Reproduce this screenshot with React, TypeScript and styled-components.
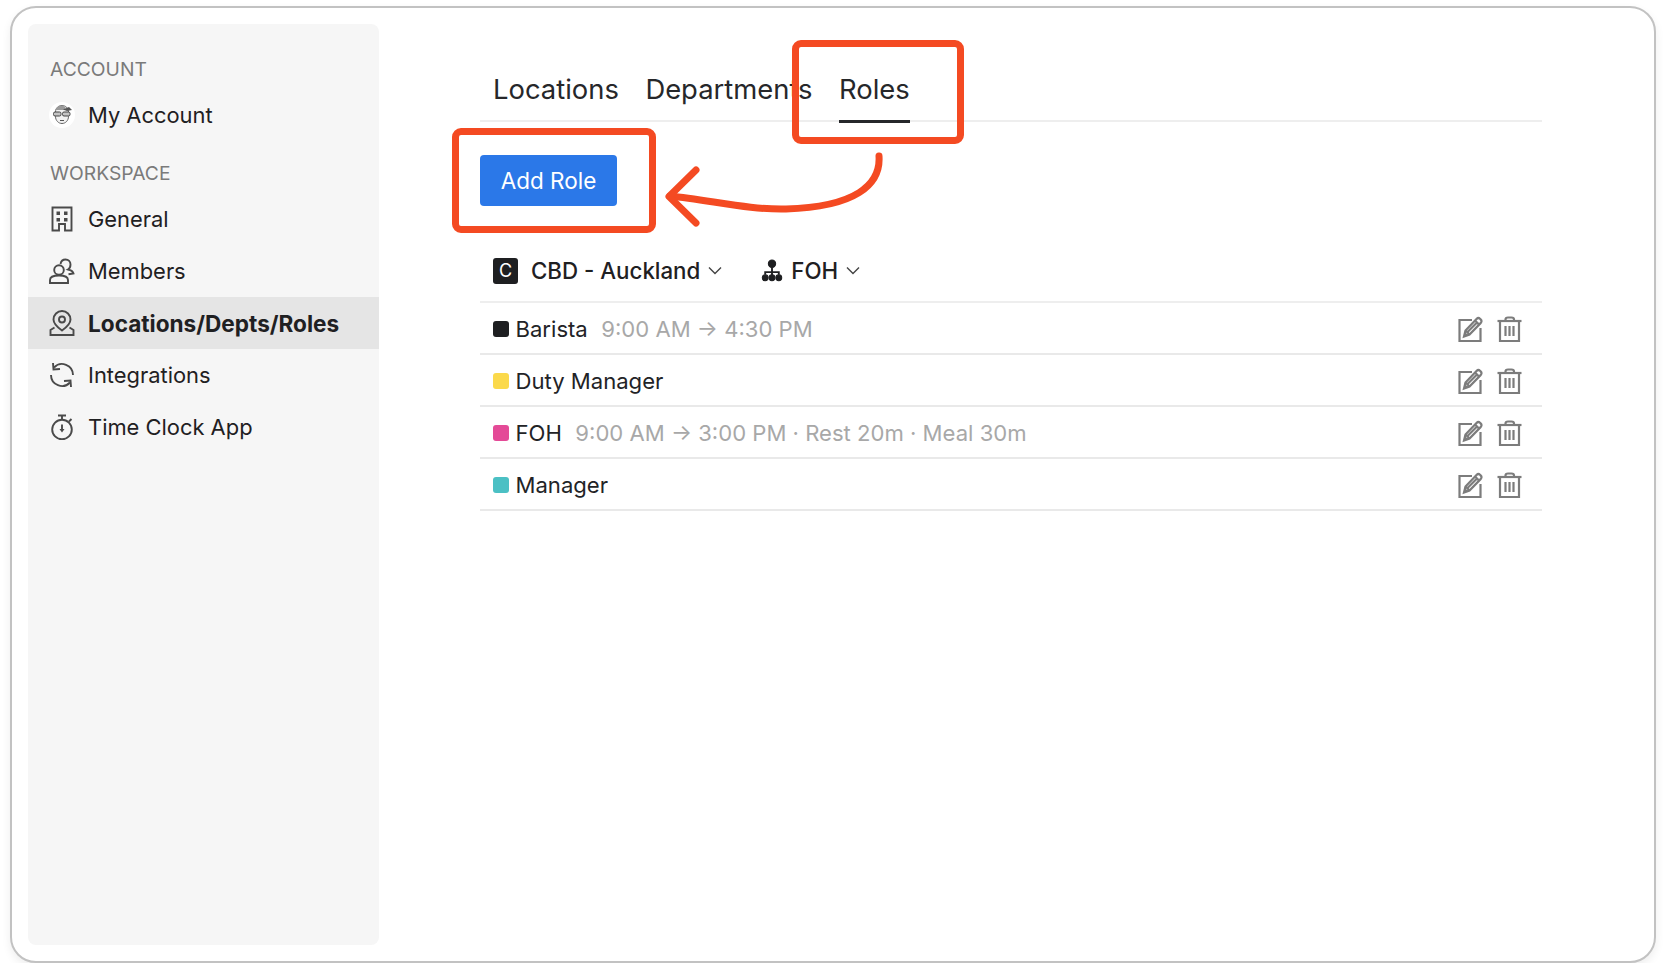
import React from "react";
import styled, { createGlobalStyle } from "styled-components";

const GlobalStyle = createGlobalStyle`
  html, body {
    margin: 0;
    padding: 0;
    background: #ffffff;
    font-family: Inter, "Liberation Sans", sans-serif;
    color: #1f2022;
  }
`;

const Frame = styled.div`
  position: relative;
  box-sizing: border-box;
  display: flex;
  width: 1646px;
  height: 957px;
  margin: 6px 0 0 10px;
  padding: 16px;
  border: 2px solid #c2c2c2;
  border-radius: 26px;
  box-shadow: 0 4px 10px rgba(0, 0, 0, 0.07);
  background: #ffffff;
`;

const Sidebar = styled.nav`
  width: 351px;
  flex-shrink: 0;
  padding-top: 32px;
  background: #f6f6f6;
  border-radius: 8px;
`;

const SectionLabel = styled.div<{ $top?: number }>`
  height: 26px;
  margin-top: ${(p) => p.$top ?? 0}px;
  padding-left: 22px;
  font-size: 19.3px;
  line-height: 26px;
  color: #7a7a7a;
`;

const NavItem = styled.div<{ $active?: boolean; $tall?: boolean }>`
  display: flex;
  align-items: center;
  height: 52px;
  margin-top: ${(p) => (p.$tall ? 7 : 0)}px;
  padding-left: 21px;
  gap: 13px;
  font-size: ${(p) => (p.$active ? 22.6 : 21.9)}px;
  font-weight: ${(p) => (p.$active ? 700 : 400)};
  color: #1f2022;
  background: ${(p) => (p.$active ? "#e5e5e5" : "transparent")};
`;

const NavIcon = styled.svg`
  width: 26px;
  height: 26px;
  flex-shrink: 0;
  fill: none;
  stroke: #4a4a4a;
  stroke-width: 1.9;
`;

const Main = styled.main`
  width: 1062px;
  margin-left: 101px;
  padding-top: 49px;
`;

const Tabs = styled.div`
  display: flex;
  gap: 26.5px;
  height: 47px;
  padding-left: 13px;
  border-bottom: 2px solid #eeeeee;
`;

const Tab = styled.div<{ $active?: boolean }>`
  height: 50px;
  box-sizing: border-box;
  font-size: 27.4px;
  line-height: 32px;
  color: #26272a;
  border-bottom: 3px solid ${(p) => (p.$active ? "#26272a" : "transparent")};
`;

const AddButton = styled.button`
  display: block;
  width: 137px;
  height: 51px;
  margin-top: 33px;
  padding: 0;
  border: none;
  border-radius: 4px;
  background: #2b78e8;
  color: #ffffff;
  font-family: inherit;
  font-size: 22.5px;
`;

const Filters = styled.div`
  display: flex;
  align-items: center;
  height: 41px;
  margin-top: 44px;
  padding: 0 0 10px 13px;
  border-bottom: 2px solid #eeeeee;
`;

const Badge = styled.div`
  display: flex;
  align-items: center;
  justify-content: center;
  width: 25px;
  height: 26px;
  margin-right: 13px;
  border-radius: 3px;
  background: #1e1f21;
  color: #ffffff;
  font-size: 18px;
`;

const FilterText = styled.span`
  font-size: 22.3px;
  font-weight: 500;
`;

const Chevron = styled.svg<{ $gap: number }>`
  width: 14px;
  height: 9px;
  margin: 0 ${(p) => p.$gap}px 0 8px;
  fill: none;
  stroke: #444444;
  stroke-width: 1.4;
`;

const OrgIcon = styled.svg`
  width: 22px;
  height: 23px;
  margin-right: 8px;
  fill: #1e1f21;
  stroke: #1e1f21;
`;

const Row = styled.div`
  display: flex;
  align-items: center;
  height: 48px;
  padding: 2px 20px 0 13px;
  border-bottom: 2px solid #e9e9e9;
  font-size: 22.1px;
`;

const Swatch = styled.span<{ $color: string }>`
  width: 16px;
  height: 16px;
  margin-right: 6.5px;
  border-radius: 3px;
  background: ${(p) => p.$color};
`;

const RoleName = styled.span`
  color: #222326;
`;

const Detail = styled.span`
  margin-left: 13.5px;
  color: #a8a8a8;
`;

const Actions = styled.div`
  display: flex;
  gap: 14px;
  margin-left: auto;
`;

const ActionIcon = styled.svg`
  width: 25px;
  height: 26px;
  fill: none;
  stroke: #7c7c7c;
  stroke-width: 2.2;
`;

/* red markup drawn on top of the screenshot */
const Callout = styled.div<{ $left: number; $top: number; $w: number; $h: number }>`
  position: absolute;
  left: ${(p) => p.$left}px;
  top: ${(p) => p.$top}px;
  box-sizing: border-box;
  width: ${(p) => p.$w}px;
  height: ${(p) => p.$h}px;
  border: 7px solid #f44a22;
  border-radius: 9px;
`;

const ArrowSvg = styled.svg`
  position: absolute;
  left: 638px;
  top: 142px;
  width: 240px;
  height: 90px;
  fill: none;
  stroke: #f44a22;
  stroke-width: 7;
  stroke-linecap: round;
  stroke-linejoin: round;
`;

const BuildingIcon = () => (
  <NavIcon viewBox="0 0 26 26">
    <path d="M3.500 1.500h19v23h-6.500v-6.500h-6v6.500h-6.500z" />
    <path
      d="M7.500 5.500h3.500v3.500h-3.500zM15 5.500h3.500v3.500h-3.500zM7.500 12h3.500v3.500h-3.500zM15 12h3.500v3.500h-3.500z"
      fill="#4a4a4a"
      stroke="none"
    />
  </NavIcon>
);

const MembersIcon = () => (
  <NavIcon viewBox="0 0 26 26">
    <circle cx="10" cy="12" r="4.800" />
    <path d="M1 25v-3c0-3 4-4.500 9-4.500s9 1.500 9 4.500v3z" />
    <path d="M11.500 6c.5-2.800 2.500-4.500 5-4.500 3 0 5 2.300 5 5 0 2-.8 4-2.500 5 2 .5 5 1.800 5.500 4l-5 .8" />
  </NavIcon>
);

const LocationIcon = () => (
  <NavIcon viewBox="0 0 26 26">
    <path d="M13 20.500C8 17 4.500 14 4.500 9.500a8.500 8.500 0 0 1 17 0c0 4.500-3.500 7.500-8.500 11z" />
    <circle cx="13" cy="9.500" r="3" />
    <path d="M5.500 17.500 1.500 20v5h23v-5l-4-2.500" />
  </NavIcon>
);

const SyncIcon = () => (
  <NavIcon viewBox="0 0 26 26">
    <path d="M24 13A11 11 0 0 0 5 5.500" />
    <path d="M4 1l.5 6.500 6.500-.5" />
    <path d="M2 13a11 11 0 0 0 19 7.500" />
    <path d="M22 25l-.5-6.500-6.500.5" />
  </NavIcon>
);

const TimerIcon = () => (
  <NavIcon viewBox="0 0 26 26">
    <circle cx="13" cy="15.500" r="9.800" />
    <path d="M9 1.500h8M13 1.500v4.200M20 7.500l2.500-2.500" />
    <path d="M13 10.500v5" />
    <path d="M10.500 15h5l-2.500 3.500z" fill="#4a4a4a" stroke="none" />
  </NavIcon>
);

const Avatar = () => (
  <NavIcon viewBox="0 0 26 26" style={{ strokeWidth: 1 }}>
    <circle cx="13" cy="13" r="13" fill="#ffffff" stroke="none" />
    <path
      d="M6.500 10c0-4 3-6.500 6.500-6.500s6.500 2.500 6.500 6.500v4.500c0 4-3 7-6.500 7s-6.500-3-6.500-7z"
      fill="#f2f2f2"
      stroke="#666666"
    />
    <path d="M6 8c2-3.500 5-4.800 8-4.500l3 2.500-2 2z" fill="#9a9a9a" stroke="none" />
    <rect x="4.500" y="10" width="7.500" height="4" rx="1.500" fill="#c4c4c4" stroke="#444444" />
    <rect x="13.500" y="10" width="7.500" height="4" rx="1.500" fill="#c4c4c4" stroke="#444444" />
    <path d="M14 7.500l6-2.500 3 3-5 1z" fill="#555555" stroke="none" />
    <path d="M11 18.500h4" stroke="#555555" />
  </NavIcon>
);

const EditIcon = () => (
  <ActionIcon viewBox="0 0 25 26">
    <path d="M14 4H1.500v21h21V12" />
    <path d="M6 20.500l1.500-6L18.500 3c1.200-1.200 2.500-1.200 3.500-.2l.8.8c1 1 1 2.300-.2 3.500L11.500 18.500z" fill="#ffffff" />
    <path d="M7.500 14.500l4 4M17 4.500l4 4M10 15.500l8.500-8.500" />
    <path d="M6 20.500l1-4.500 3.500 3.500z" fill="#7c7c7c" stroke="none" />
  </ActionIcon>
);

const TrashIcon = () => (
  <ActionIcon viewBox="0 0 25 26">
    <path d="M.5 5h24" />
    <path d="M8.500 5V3.500C8.500 2 9.500 1.500 11 1.500h3.500c1.500 0 2.500.5 2.500 2V5" />
    <path d="M3 5v20h19V5" />
    <path d="M8.500 10v10M12.500 10v10M16.500 10v10" />
  </ActionIcon>
);

const roles = [
  { name: "Barista", color: "#1e1f21", detail: "9:00 AM → 4:30 PM" },
  { name: "Duty Manager", color: "#fbd94b" },
  { name: "FOH", color: "#e44a97", detail: "9:00 AM → 3:00 PM · Rest 20m · Meal 30m" },
  { name: "Manager", color: "#4bc0c4" },
];

const App = () => {
  return (
    <>
      <GlobalStyle />
      <Frame>
        <Sidebar>
          <SectionLabel>ACCOUNT</SectionLabel>
          <NavItem $tall>
            <Avatar />
            My Account
          </NavItem>
          <SectionLabel $top={19}>WORKSPACE</SectionLabel>
          <NavItem $tall>
            <BuildingIcon />
            General
          </NavItem>
          <NavItem>
            <MembersIcon />
            Members
          </NavItem>
          <NavItem $active>
            <LocationIcon />
            Locations/Depts/Roles
          </NavItem>
          <NavItem>
            <SyncIcon />
            Integrations
          </NavItem>
          <NavItem>
            <TimerIcon />
            Time Clock App
          </NavItem>
        </Sidebar>

        <Main>
          <Tabs>
            <Tab>Locations</Tab>
            <Tab>Departments</Tab>
            <Tab $active>Roles</Tab>
          </Tabs>

          <AddButton>Add Role</AddButton>

          <Filters>
            <Badge>C</Badge>
            <FilterText>CBD - Auckland</FilterText>
            <Chevron $gap={39} viewBox="0 0 14 9">
              <path d="M1 1.500l6 6 6-6" />
            </Chevron>
            <OrgIcon viewBox="0 0 20 22">
              <circle cx="10" cy="4.500" r="3.500" />
              <path d="M10 8v5M3.500 15v-2.500h13V15M10 13v3" fill="none" strokeWidth="1.800" />
              <circle cx="3.500" cy="18" r="2.800" />
              <circle cx="10" cy="18" r="2.800" />
              <circle cx="16.500" cy="18" r="2.800" />
            </OrgIcon>
            <FilterText>FOH</FilterText>
            <Chevron $gap={0} viewBox="0 0 14 9">
              <path d="M1 1.500l6 6 6-6" />
            </Chevron>
          </Filters>

          {roles.map((role) => (
            <Row key={role.name}>
              <Swatch $color={role.color} />
              <RoleName>{role.name}</RoleName>
              {role.detail && <Detail>{role.detail}</Detail>}
              <Actions>
                <EditIcon />
                <TrashIcon />
              </Actions>
            </Row>
          ))}
        </Main>

        <Callout $left={780} $top={32} $w={172} $h={104} />
        <Callout $left={440} $top={120} $w={204} $h={105} />
        <ArrowSvg viewBox="0 0 240 90">
          <path d="M229 6c2 29-24 51-93 53-36 1-76-9-116-13" />
          <path d="M46 20 19 46.500 46 73" />
        </ArrowSvg>
      </Frame>
    </>
  );
};

export default App;
